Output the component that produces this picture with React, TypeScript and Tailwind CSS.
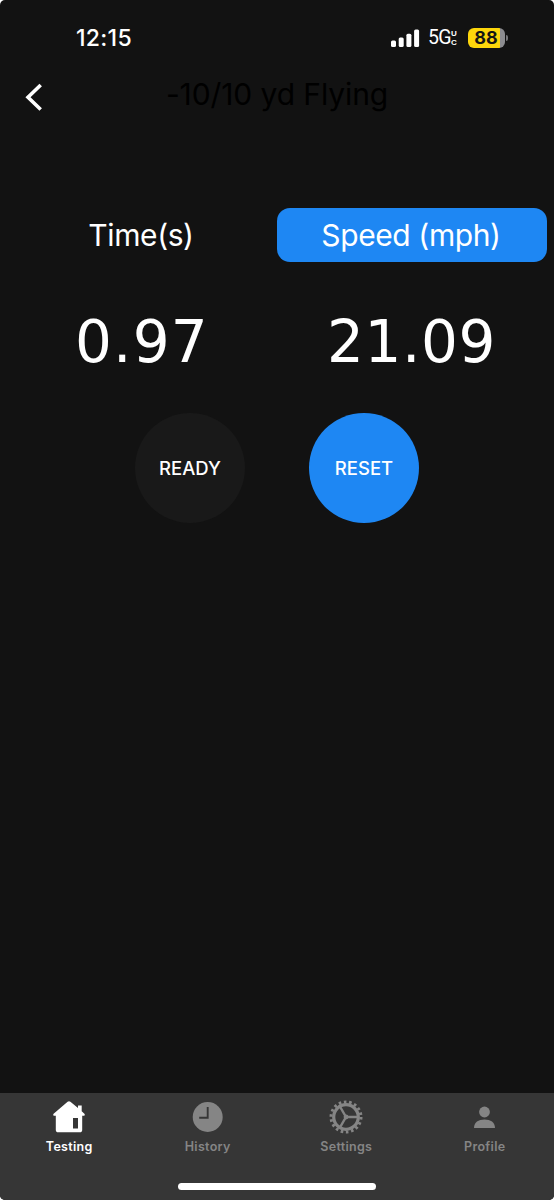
import { useState } from "react";
import type { ReactNode } from "react";

const HomeIcon = () => (
  <svg width="32" height="32" viewBox="0 0 32 32" fill="currentColor">
    <path
      fillRule="evenodd"
      d="M16 0.2c.5 0 .9.2 1.400.6L25 7V4.400h3.700V10.300l2.700 2.500c.7.700.4 1.900-.7 1.900H29.200v14.300c0 1.500-1 2.300-2.300 2.300H5.100C3.800 31.300 2.800 30.500 2.800 29V14.700H1.300c-1.100 0-1.400-1.200-.7-1.900L14.600.8c.5-.4.900-.6 1.400-.6zM20 16.900v10.500h5V16.900z"
    />
  </svg>
);

const ClockIcon = () => (
  <svg width="32" height="32" viewBox="0 0 32 32">
    <circle cx="15.700" cy="16" r="15" fill="currentColor" />
    <path d="M15.700 6v10.800H7.200" fill="none" stroke="#363636" strokeWidth="1.900" />
  </svg>
);

const GearIcon = () => (
  <svg width="34" height="34" viewBox="-17 -17 34 34" fill="none" stroke="currentColor">
    <circle r="12.300" strokeWidth="3.200" />
    <circle r="15" strokeWidth="3" strokeDasharray="2.600 2.636" />
    <path d="M0 0H12M0 0L-6-10.400M0 0L-6 10.400" strokeWidth="2.400" />
    <circle r="2.400" fill="currentColor" stroke="none" />
  </svg>
);

const PersonIcon = () => (
  <svg width="32" height="32" viewBox="0 0 32 32" fill="currentColor">
    <circle cx="15.500" cy="11" r="5.400" />
    <path d="M5 27c0-5.800 4.500-8.500 10.500-8.500s10.500 2.700 10.500 8.500z" />
  </svg>
);

const tabs: { name: string; icon: ReactNode }[] = [
  { name: "Testing", icon: <HomeIcon /> },
  { name: "History", icon: <ClockIcon /> },
  { name: "Settings", icon: <GearIcon /> },
  { name: "Profile", icon: <PersonIcon /> },
];

const StatusBar = () => (
  <div className="flex h-[76px] items-center justify-between pl-[76px] pr-[46px] text-white">
    <span className="text-[23px] font-medium tracking-[0.3px]">12:15</span>
    <div className="flex items-center">
      <svg width="29" height="19" viewBox="0 0 29 19" fill="currentColor">
        <rect x="0" y="11.500" width="5" height="6.500" rx="1.500" />
        <rect x="7.700" y="8.500" width="5" height="9.500" rx="1.500" />
        <rect x="15.400" y="4.700" width="5" height="13.300" rx="1.500" />
        <rect x="23.100" y="0.500" width="5" height="17.500" rx="1.500" />
      </svg>
      <span className="ml-[8px] w-[22px] font-['Roboto',sans-serif] text-[19.500px] leading-none tracking-[-0.6px]">5G</span>
      <span className="ml-px flex w-[8px] flex-col font-['Liberation_Sans',sans-serif] text-[8px] font-bold leading-[9px]">
        <span>U</span>
        <span>C</span>
      </span>
      <div className="ml-[9px] flex h-5 w-[37px] items-center justify-center rounded-[6px] bg-linear-to-r from-[#fdd60b] from-87% to-[#8c8c90] to-87% pr-px text-[18px] font-bold leading-none text-[#151515]">
        88
      </div>
      <div className="ml-px h-[6px] w-[2px] rounded-r-full bg-[#77777a]" />
    </div>
  </div>
);

const App = () => {
  const [unit, setUnit] = useState("speed");
  const [activeTab, setActiveTab] = useState("Testing");

  return (
    <div className="bg-white font-['Inter',sans-serif]">
      <div className="flex h-[1200px] w-[554px] flex-col overflow-hidden rounded-[5px] bg-[#121212]">
        <StatusBar />

        {/* Header */}
        <header className="grid h-[42px] grid-cols-[60px_1fr_60px] items-center">
          <button className="pl-[25px]" aria-label="Back">
            <svg width="18" height="28" viewBox="0 0 18 28" fill="none" stroke="white" strokeWidth="3.600">
              <path d="M15.700 2L3 14.200L15.700 26.500" />
            </svg>
          </button>
          <h1 className="pb-[6px] text-center text-[30px] leading-none tracking-[-0.1px] text-black">-10/10 yd Flying</h1>
        </header>

        {/* Unit toggle */}
        <div className="mt-[90px] grid grid-cols-2 pl-[7px] pr-[7px] text-[30px] tracking-[-0.4px] text-white">
          <button onClick={() => setUnit("time")} className={`h-[54px] rounded-[13px] pr-[2px] ${unit === "time" ? "bg-[#1e87f3]" : ""}`}>
            Time(s)
          </button>
          <button onClick={() => setUnit("speed")} className={`h-[54px] rounded-[13px] pr-[2px] ${unit === "speed" ? "bg-[#1e87f3]" : ""}`}>
            Speed (mph)
          </button>
        </div>

        {/* Readings */}
        <div className="mt-[45px] flex h-[70px] items-center font-['DejaVu_Sans',sans-serif] text-[58px] leading-none text-white">
          <span className="ml-[75px] w-[252px] tracking-[1.2px]">0.97</span>
          <span className="tracking-[0.6px]">21.09</span>
        </div>

        <div className="mt-[36px] flex justify-center gap-[64px] text-[18.500px] font-medium text-white">
          <button className="size-[110px] rounded-full bg-[#191919] pt-[2px]">READY</button>
          <button className="size-[110px] rounded-full bg-[#1e87f3] pt-[2px]">RESET</button>
        </div>

        {/* Tab bar */}
        <nav className="mt-auto flex h-[107px] flex-col items-center bg-[#363636]">
          <div className="grid w-full grid-cols-4">
            {tabs.map((tab) => (
              <button
                key={tab.name}
                onClick={() => setActiveTab(tab.name)}
                className={`flex flex-col items-center pt-[7px] text-[12.500px] font-semibold tracking-[0.3px] ${
                  tab.name === activeTab ? "text-white" : "text-[#858585]"
                }`}
              >
                <span className="flex h-[34px] items-center">{tab.icon}</span>
                <span className="mt-[3px] leading-5">{tab.name}</span>
              </button>
            ))}
          </div>
          <div className="mt-auto mb-[10px] h-[7px] w-[198px] rounded-full bg-white" />
        </nav>
      </div>
    </div>
  );
};

export default App;
